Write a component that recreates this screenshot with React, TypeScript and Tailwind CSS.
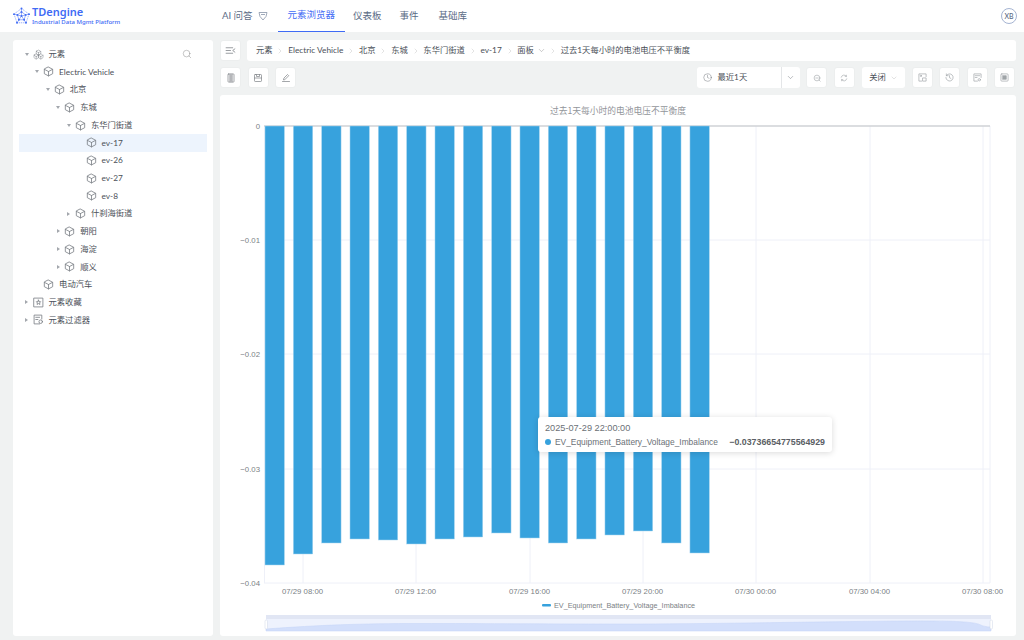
import { Boxes, ChevronDown, ChevronRight, Clock, Search } from 'lucide-react'

const tree = [
  { label: '元素', depth: 0, caret: 'down', icon: 'root' },
  { label: 'Electric Vehicle', depth: 1, caret: 'down' },
  { label: '北京', depth: 2, caret: 'down' },
  { label: '东城', depth: 3, caret: 'down' },
  { label: '东华门街道', depth: 4, caret: 'down' },
  { label: 'ev-17', depth: 5, selected: true },
  { label: 'ev-26', depth: 5 },
  { label: 'ev-27', depth: 5 },
  { label: 'ev-8', depth: 5 },
  { label: '什刹海街道', depth: 4, caret: 'right' },
  { label: '朝阳', depth: 3, caret: 'right' },
  { label: '海淀', depth: 3, caret: 'right' },
  { label: '顺义', depth: 3, caret: 'right' },
  { label: '电动汽车', depth: 1 },
  { label: '元素收藏', depth: 0, caret: 'right', icon: 'star' },
  { label: '元素过滤器', depth: 0, caret: 'right', icon: 'filter' },
]

const crumbs = ['元素', 'Electric Vehicle', '北京', '东城', '东华门街道', 'ev-17']

const bottoms = [565, 554, 543, 539, 540, 544, 539, 537, 533, 538, 543, 539, 535, 531, 543, 553]

const xLabels = [
  { x: 303, text: '07/29 08:00' },
  { x: 416, text: '07/29 12:00' },
  { x: 530, text: '07/29 16:00' },
  { x: 643, text: '07/29 20:00' },
  { x: 756, text: '07/30 00:00' },
  { x: 870, text: '07/30 04:00' },
  { x: 983, text: '07/30 08:00' },
]

const yLabels = [
  { y: 126, text: '0' },
  { y: 240, text: '−0.01' },
  { y: 354, text: '−0.02' },
  { y: 469, text: '−0.03' },
  { y: 583, text: '−0.04' },
]

const chartFont = "'Liberation Sans', sans-serif"

const Glyph = ({ size = 10, children }: { size?: number; children: React.ReactNode }) => (
  <svg width={size} height={size} viewBox="0 0 10 10" fill="none" stroke="currentColor" strokeWidth="0.75" strokeLinejoin="round" strokeLinecap="round">
    {children}
  </svg>
)

const Cube = () => (
  <Glyph size={11}>
    <path d="M5 1 8.800 3v4L5 9 1.200 7V3z" />
    <path d="M1.400 3.100 5 5l3.600-1.900M5 5v4" />
  </Glyph>
)

const StarBox = () => (
  <Glyph size={11}>
    <rect x="1" y="1" width="8" height="8" />
    <path d="M5 2.800 5.600 4.200 7 4.300 6 5.300 6.300 6.800 5 6 3.700 6.800 4 5.300 3 4.300 4.400 4.200z" />
  </Glyph>
)

const FilterDoc = () => (
  <Glyph size={11}>
    <path d="M6 9H1V1h7v3.500" />
    <path d="M2.500 3h3.500M2.500 5h2" />
    <circle cx="7" cy="7" r="1.600" />
  </Glyph>
)

const IconButton = ({ children }: { children: React.ReactNode }) => (
  <div className="flex h-[21px] w-[21px] items-center justify-center rounded-[3px] border border-[#eceeee] bg-white text-[#85898e]">
    {children}
  </div>
)

const Logo = () => (
  <svg width="19" height="18" viewBox="0 0 24 24" fill="none" stroke="#5a7cf5" strokeWidth="0.8">
    <polygon points="12,2 22,9.500 18,21 6,21 2,9.500" strokeDasharray="1.500 1" />
    <polygon points="12,6.500 17.500,10.500 15.500,17 8.500,17 6.500,10.500" />
    <path d="M12 2v10M22 9.500 12 12M18 21l-6-9M6 21l6-9M2 9.500 12 12" />
    {[[12, 2], [22, 9.5], [18, 21], [6, 21], [2, 9.5], [12, 12], [12, 6.5], [17.5, 10.5], [15.5, 17], [8.5, 17], [6.5, 10.5]].map(([cx, cy], i) => (
      <circle key={i} cx={cx} cy={cy} r="1.300" fill="#3f6bf5" stroke="none" />
    ))}
  </svg>
)

const Chart = () => (
  <svg width="796" height="541" viewBox="220 95 796 541" className="block">
    {xLabels.map((l) => (
      <line key={l.x} x1={l.x} x2={l.x} y1="126" y2="583" stroke="#eef0f8" />
    ))}
    <line x1="990" x2="990" y1="126" y2="583" stroke="#eef0f8" />
    <line x1="264.500" x2="264.500" y1="126" y2="583" stroke="#eef0f8" />
    {yLabels.slice(1).map((l) => (
      <line key={l.y} x1="264" x2="990" y1={l.y} y2={l.y} stroke="#eef0f8" />
    ))}
    <line x1="264" x2="990" y1="126" y2="126" stroke="#cfd2d6" strokeWidth="1.500" />
    {bottoms.map((b, i) => (
      <rect key={i} x={265 + i * 28.33} y="126" width="19.400" height={b - 126} fill="#37a2dd" stroke="#a8d5f0" strokeWidth="0.500" />
    ))}
    {yLabels.map((l) => (
      <text key={l.y} x="260" y={l.y + 2.5} textAnchor="end" fontSize="7.800" fill="#7b7f85" fontFamily={chartFont}>{l.text}</text>
    ))}
    {xLabels.map((l) => (
      <text key={l.x} x={l.x - 0.5} y="594" textAnchor="middle" fontSize="7.800" fill="#7b7f85" fontFamily={chartFont}>{l.text}</text>
    ))}
    <text x="618" y="114" textAnchor="middle" fontSize="8.750" fill="#93969b" fontFamily="'Noto Sans CJK SC', sans-serif">过去1天每小时的电池电压不平衡度</text>
    <rect x="542" y="604" width="9" height="2.500" rx="1" fill="#37a2dd" />
    <text x="554" y="608" fontSize="7.250" fill="#7b7f85" fontFamily={chartFont}>EV_Equipment_Battery_Voltage_Imbalance</text>
    <rect x="266" y="615" width="725" height="16" fill="#eef2fd" />
    <rect x="266" y="615" width="725" height="4" fill="#e1e6f4" />
    <path d="M266 629 C 320 625, 360 623.500, 420 623.500 S 560 624, 628 624 S 800 622, 900 621 S 970 626, 991 627 V631 H266 Z" fill="#d3dffb" stroke="#c3d2f7" strokeWidth="0.500" />
    <rect x="265" y="620" width="2.500" height="9" rx="1.200" fill="#fff" stroke="#cfd6e6" strokeWidth="0.500" />
    <rect x="990" y="620" width="2.500" height="9" rx="1.200" fill="#fff" stroke="#cfd6e6" strokeWidth="0.500" />
  </svg>
)

const treeIcon = (icon?: string) => {
  if (icon === 'root') return <Boxes size={11} strokeWidth={1} />
  if (icon === 'star') return <StarBox />
  if (icon === 'filter') return <FilterDoc />
  return <Cube />
}

export default function App() {
  return (
    <div className="flex h-[640px] w-[1024px] flex-col overflow-hidden bg-[#f0f2f2] text-[#4b5058] font-['Lato','Noto_Sans_CJK_SC',sans-serif]">
      <header className="flex h-8 shrink-0 items-center bg-white">
        <div className="flex w-[222px] items-center pl-3">
          <Logo />
          <div className="ml-[1px] flex flex-col font-['Noto_Sans',sans-serif]">
            <span className="text-[11px] leading-[12px] font-semibold text-[#3f6bf5]">TDengine</span>
            <span className="text-[6px] leading-[8px] font-medium text-[#3f6bf5]">Industrial Data Mgmt Platform</span>
          </div>
        </div>
        <nav className="flex h-full items-center text-[9.5px] text-[#5b6b85]">
          <span className="flex items-center gap-[5px]">AI 问答
            <svg width="10" height="10" viewBox="0 0 10 10" fill="none" stroke="#8894a8" strokeWidth="0.8"><path d="M1 1.500h8L8 5.500 5 9 2 5.500zM3 3.500h4" /></svg>
          </span>
          <span className="ml-[10px] flex h-full items-center border-b border-[#3f6bf5] px-[10px] text-[#3f6bf5]">元素浏览器</span>
          <span className="ml-[8px]">仪表板</span>
          <span className="ml-[18px]">事件</span>
          <span className="ml-[20px]">基础库</span>
        </nav>
        <div className="mr-[7px] ml-auto flex h-4 w-4 items-center justify-center rounded-full border border-[#a5b4d2] text-[7px] font-medium text-[#5b6b85]">XB</div>
      </header>

      <div className="flex flex-1 gap-[7px] pt-2 pr-2 pb-1 pl-[13px]">
        <aside className="w-[200px] shrink-0 rounded-[3px] bg-white px-[6px] pt-[5.3px]">
          {tree.map((n) => (
            <div
              key={n.label}
              className={n.selected ? 'flex h-[17.72px] items-center bg-[#edf4fd] text-[8.3px]' : 'flex h-[17.72px] items-center text-[8.3px]'}
              style={{ paddingLeft: 4 + n.depth * 10.6 }}
            >
              <span className="flex w-[7px] justify-center">
                {n.caret === 'down' && <span className="h-0 w-0 border-x-[2.5px] border-t-[3px] border-x-transparent border-t-[#a3a7ad]" />}
                {n.caret === 'right' && <span className="h-0 w-0 border-y-[2.5px] border-l-[3px] border-y-transparent border-l-[#a3a7ad]" />}
              </span>
              <span className="mr-[5px] ml-[2.5px] text-[#7b8085]">{treeIcon(n.icon)}</span>
              <span>{n.label}</span>
              {n.icon === 'root' && <Search size={10} strokeWidth={1} className="mr-[15px] ml-auto text-[#777]" />}
            </div>
          ))}
        </aside>

        <main className="flex min-w-0 flex-1 flex-col">
          <div className="flex h-[21px] gap-[6px]">
            <IconButton>
              <Glyph size={11}>
                <path d="M1 2.500h6M1 5h4M1 7.500h6M9 3.500 7 5l2 1.500" />
              </Glyph>
            </IconButton>
            <div className="flex flex-1 items-center rounded-[3px] bg-white pl-[9px] text-[8.3px]">
              {crumbs.map((c) => (
                <span key={c} className="flex items-center">
                  {c}
                  <ChevronRight size={8} strokeWidth={1} className="mx-[3.8px] text-[#aaa]" />
                </span>
              ))}
              <span>面板</span>
              <ChevronDown size={9} strokeWidth={1} className="mx-[3px] text-[#777]" />
              <ChevronRight size={8} strokeWidth={1} className="mr-[3.3px] ml-[0.5px] text-[#aaa]" />
              <span>过去1天每小时的电池电压不平衡度</span>
            </div>
          </div>

          <div className="mt-[6px] flex h-[21px] items-center gap-[6.5px] pr-[1px]">
            <IconButton>
              <Glyph size={10}><rect x="2" y="1" width="6" height="8" rx="0.500" /><path d="M4 1v8M6 1v8M4 3h2M4 5h2M4 7h2" /></Glyph>
            </IconButton>
            <IconButton>
              <Glyph size={10}><rect x="1.500" y="1.500" width="7" height="7" rx="0.700" /><path d="M1.500 5h7M3.500 1.500V3.500h3V1.500" /></Glyph>
            </IconButton>
            <IconButton>
              <Glyph size={10}><path d="M2.500 6.500 3 5l3.500-3.500 1.200 1.200L4 6.500zM1.500 8.500h7" /></Glyph>
            </IconButton>
            <div className="ml-auto flex h-[21px] w-[103px] items-center rounded-[3px] bg-white text-[8.3px]">
              <Clock size={9} strokeWidth={1} className="mr-[5.5px] ml-[6.5px] text-[#4b5058]" />
              <span className="flex-1">最近1天</span>
              <span className="flex h-full w-[19px] items-center justify-center border-l border-[#e4e6e8]"><ChevronDown size={9} strokeWidth={1} /></span>
            </div>
            <IconButton>
              <span className="text-[#a0a4a8]"><Glyph size={8}><circle cx="5" cy="5" r="3.600" /><path d="M3.500 5h3M7.500 7.500 9 9" /></Glyph></span>
            </IconButton>
            <IconButton>
              <span className="text-[#a0a4a8]"><Glyph size={8}><path d="M1.500 4A3.600 3.600 0 0 1 8 3M8.500 6A3.600 3.600 0 0 1 2 7M8 1.500V3H6.500M2 8.500V7h1.500" /></Glyph></span>
            </IconButton>
            <div className="ml-[1px] flex h-[21px] w-[43px] items-center justify-center gap-1 rounded-[3px] bg-white text-[8.3px]">关闭<ChevronDown size={8} strokeWidth={1} className="text-[#aaa]" /></div>
            <IconButton>
              <span className="text-[#a0a4a8]"><Glyph size={9}><path d="M4 9H1V1h8v3" /><circle cx="3.200" cy="3.200" r="0.700" /><rect x="5.500" y="5.500" width="3.500" height="3.500" /></Glyph></span>
            </IconButton>
            <IconButton>
              <span className="text-[#a0a4a8]"><Glyph size={9}><path d="M1.500 3A4 4 0 1 1 1 5M1.500 1v2h2M5 3v2.200L6.500 6" /></Glyph></span>
            </IconButton>
            <IconButton>
              <span className="text-[#a0a4a8]"><Glyph size={9}><path d="M5 9H1V1h8v4" /><path d="M2.500 3h5M2.500 5h2" /><circle cx="7" cy="7.500" r="1.300" /></Glyph></span>
            </IconButton>
            <IconButton>
              <span className="text-[#a0a4a8]"><Glyph size={9}><rect x="1" y="1" width="8" height="8" rx="1" /><rect x="3" y="3" width="4" height="4" fill="currentColor" /></Glyph></span>
            </IconButton>
          </div>

          <div className="relative mt-[7px] flex-1 overflow-hidden rounded-[3px] bg-white">
            <Chart />
            <div className="absolute top-[322px] left-[318px] flex h-[35px] w-[294px] flex-col justify-center rounded-[3px] bg-white px-[7px] font-['Liberation_Sans',sans-serif] text-[8.4px] text-[#6b7076] shadow-[0_1px_6px_rgba(0,0,0,0.15)]">
              <span className="text-[9.2px] leading-[14px]">2025-07-29 22:00:00</span>
              <span className="flex items-center leading-[14px]">
                <span className="mr-[4px] h-[6px] w-[6px] rounded-full bg-[#37a2dd]" />
                EV_Equipment_Battery_Voltage_Imbalance
                <span className="ml-auto text-[8.8px] font-bold text-[#5a5e64]">−0.03736654775564929</span>
              </span>
            </div>
          </div>
        </main>
      </div>
    </div>
  )
}
